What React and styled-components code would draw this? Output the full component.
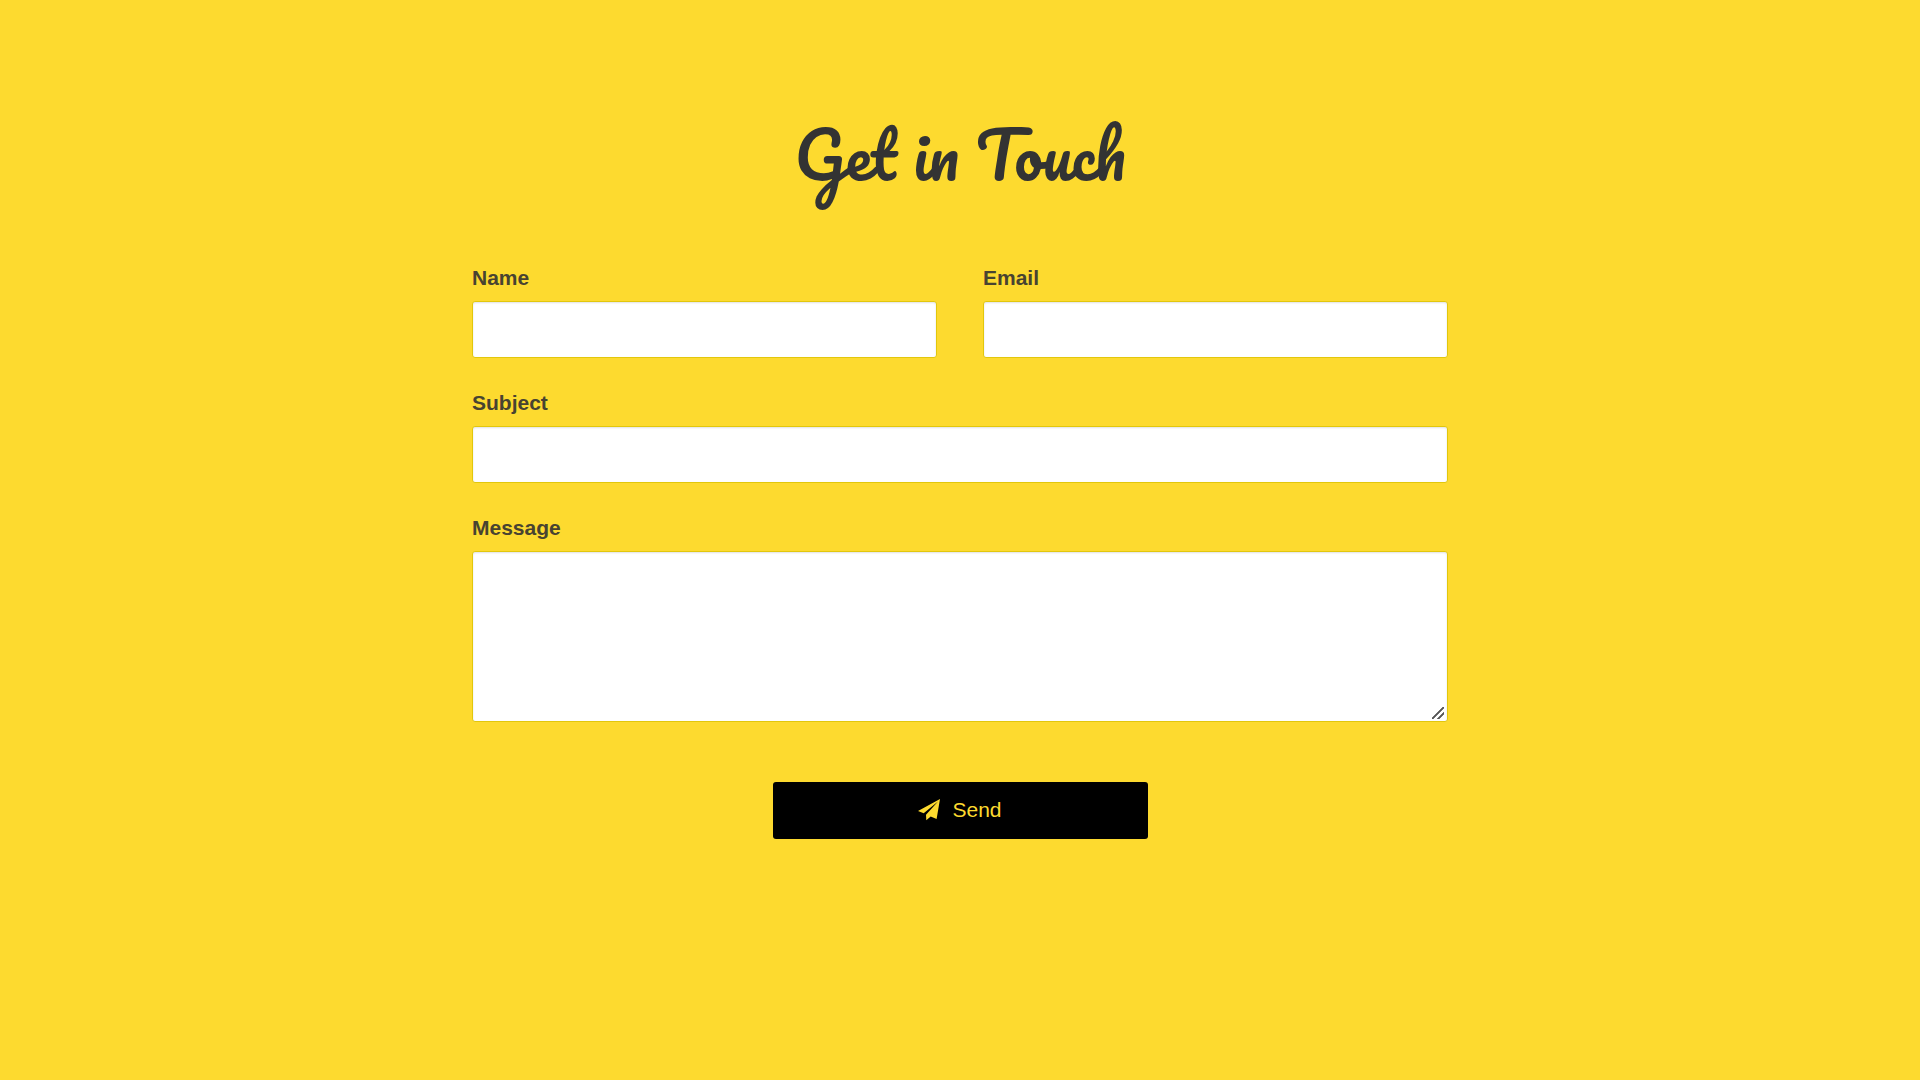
import React from "react";
import styled, { createGlobalStyle } from "styled-components";

const GlobalStyle = createGlobalStyle`
  *, *::before, *::after {
    box-sizing: border-box;
  }
  body {
    margin: 0;
    background: #fdda2f;
    color: #333;
    font-family: Arial, "Liberation Sans", sans-serif;
    font-size: 21px;
  }
`;

const Page = styled.main`
  max-width: 1024px;
  margin: 0 auto;
  padding: 88px 24px;
`;

const Title = styled.h1`
  margin: 0 0 44px;
  text-align: center;
  font-family: Pacifico, cursive;
  font-size: 63px;
  font-weight: 400;
  line-height: 133px;
`;

const Form = styled.form`
  display: grid;
  grid-template-columns: 1fr 1fr;
  column-gap: 46px;
  row-gap: 32px;
`;

const Field = styled.div`
  display: flex;
  flex-direction: column;
  gap: 10px;
  grid-column: ${({ $wide }) => ($wide ? "1 / -1" : "auto")};
`;

const Label = styled.label`
  color: #484331;
  font-weight: 700;
  line-height: 26px;
`;

const Input = styled.input`
  width: 100%;
  height: 57px;
  padding: 12px 16px;
  border: 1px solid #e2c70c;
  border-radius: 3px;
  background: #fff;
  box-shadow: inset 0 1px 2px rgba(0, 0, 0, 0.12);
  color: #333;
  font: inherit;
`;

const TextArea = styled(Input)`
  display: block;
  height: 171px;
  resize: vertical;

  &::-webkit-resizer {
    background: linear-gradient(
        135deg,
        transparent 45%,
        #555 46%,
        #555 54%,
        transparent 55%,
        transparent 70%,
        #555 71%,
        #555 79%,
        transparent 80%
      )
      0 1px / 12px 12px no-repeat;
  }
`;

const SendButton = styled.button`
  grid-column: 1 / -1;
  justify-self: center;
  display: flex;
  align-items: center;
  justify-content: center;
  gap: 12px;
  width: 375px;
  max-width: 100%;
  height: 57px;
  margin-top: 28px;
  padding: 0 16px 2px;
  border: 0;
  border-radius: 3px;
  background: #000;
  color: #fdda2f;
  font: inherit;
  cursor: pointer;
`;

const PlaneIcon = styled.svg`
  width: 22px;
  height: 22px;
  fill: currentColor;
`;

export default function App() {
  return (
    <>
      <GlobalStyle />
      <Page>
        <Title>Get in Touch</Title>
        <Form onSubmit={(event) => event.preventDefault()}>
          <Field>
            <Label htmlFor="name">Name</Label>
            <Input id="name" name="name" type="text" />
          </Field>
          <Field>
            <Label htmlFor="email">Email</Label>
            <Input id="email" name="email" type="email" />
          </Field>
          <Field $wide>
            <Label htmlFor="subject">Subject</Label>
            <Input id="subject" name="subject" type="text" />
          </Field>
          <Field $wide>
            <Label htmlFor="message">Message</Label>
            <TextArea as="textarea" id="message" name="message" />
          </Field>
          <SendButton type="submit">
            <PlaneIcon viewBox="0 0 22 22" aria-hidden="true">
              <path d="M22 0 L18.6 20 L12.7 17.5 L8.3 21.3 L8 15.7 L20 2.5 L5.7 14.3 L0 12 Z" />
            </PlaneIcon>
            Send
          </SendButton>
        </Form>
      </Page>
    </>
  );
}
